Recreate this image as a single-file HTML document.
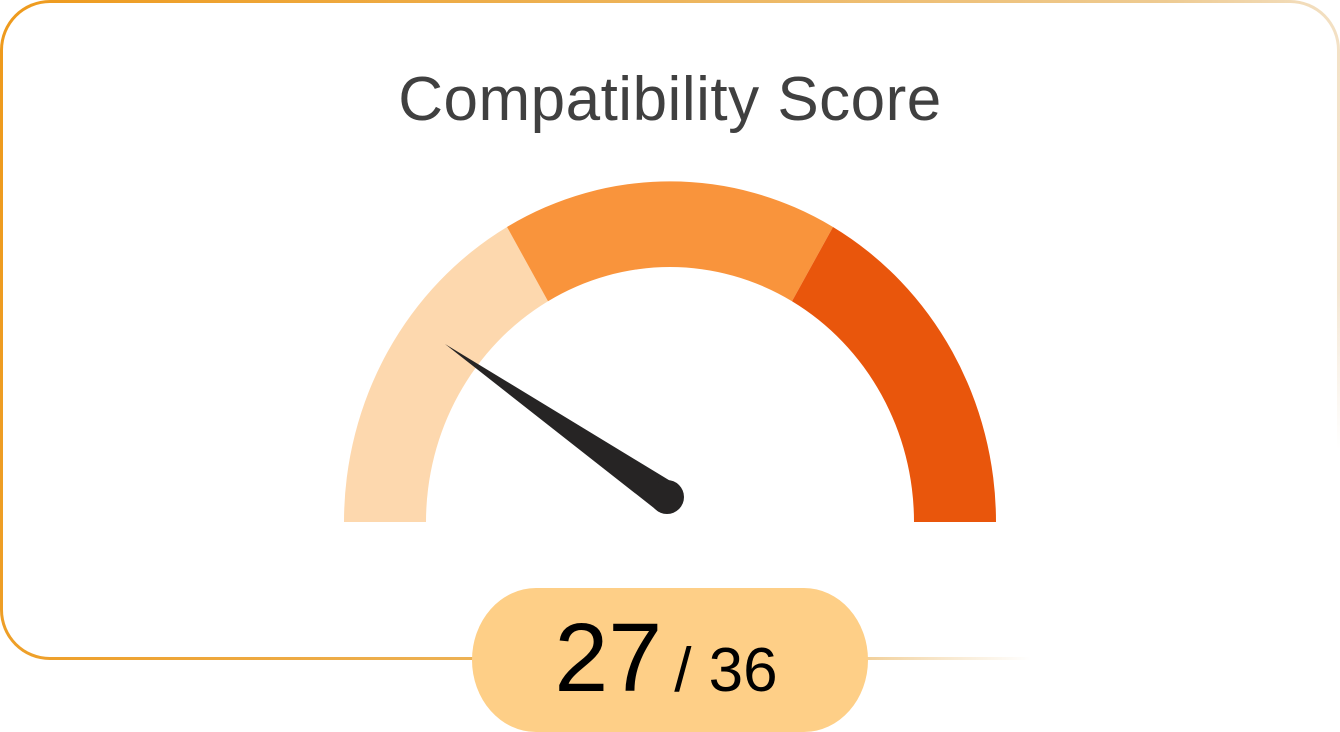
<!DOCTYPE html>
<html><head><style>
html,body{margin:0;padding:0;width:1340px;height:732px;background:#fff;overflow:hidden;position:relative;font-family:"Liberation Sans",sans-serif}
.card{position:absolute;left:0;top:0;width:1340px;height:660px;box-sizing:border-box;border-radius:50px;padding:3px;background:linear-gradient(100deg,#EE9A1C 0%,#EDB45A 45%,#EECB92 80%,#F6EEE4 100%)}
.inner{width:100%;height:100%;background:#fff;border-radius:47px}
.cover{position:absolute;left:0;top:0;width:1340px;height:732px;background:radial-gradient(ellipse 520px 400px at 1340px 690px,#fff 0%,#fff 60%,rgba(255,255,255,0) 100%)}
.title{position:absolute;left:0;width:1340px;top:64px;text-align:center;font-size:62px;color:#404040;letter-spacing:0.5px}
.badge{position:absolute;left:472px;top:588px;width:396px;height:144px;background:#FECF87;border-radius:64px/72px}
.num{position:absolute;left:-4px;width:396px;top:14px;text-align:center;color:#000;white-space:nowrap}
.num .a{font-size:97px}
.num .b{font-size:62px;margin-left:12px}
</style></head><body>
<div class="card"><div class="inner"></div></div>
<div class="cover"></div>
<div class="title">Compatibility Score</div>
<svg width="1340" height="732" style="position:absolute;left:0;top:0">
<g transform="translate(670,522) scale(1,1.045)">
<path d="M-326 0 A326 326 0 0 1 -163 -282.3 L-122 -211.3 A244 244 0 0 0 -244 0 Z" fill="#FDD8AE"/>
<path d="M-163 -282.3 A326 326 0 0 1 163 -282.3 L122 -211.3 A244 244 0 0 0 -122 -211.3 Z" fill="#F9943C"/>
<path d="M163 -282.3 A326 326 0 0 1 326 0 L244 0 A244 244 0 0 0 122 -211.3 Z" fill="#E9560C"/>
</g>
<path d="M445 344 L677 485 L659 512 Z" fill="#262424"/>
<circle cx="667" cy="497" r="17" fill="#262424"/>
</svg>
<div class="badge"><div class="num"><span class="a">27</span><span class="b">/ 36</span></div></div>
</body></html>
